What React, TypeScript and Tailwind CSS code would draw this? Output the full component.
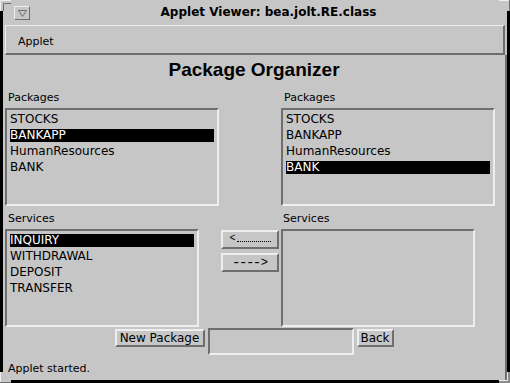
import React from "react";

function ListBox({
  items,
  selected,
  widthClass,
}: {
  items: string[];
  selected: number;
  widthClass: string;
}) {
  return (
    <div
      className={`${widthClass} h-[98px] border-2 border-t-[#6e6e6e] border-l-[#6e6e6e] border-b-[#eeeeee] border-r-[#eeeeee] pt-[2px] px-[3px]`}
    >
      {items.map((it, i) => (
        <div key={it} className="h-[16px] pt-[1px]">
          <div
            className={`h-[13px] leading-[13px] text-[12px] whitespace-nowrap ${
              i === selected ? "bg-black text-white" : "text-black"
            }`}
          >
            {it}
          </div>
        </div>
      ))}
    </div>
  );
}

function Raised({
  className,
  children,
}: {
  className: string;
  children: React.ReactNode;
}) {
  return (
    <div
      className={`${className} border-2 border-t-[#eeeeee] border-l-[#eeeeee] border-b-[#6e6e6e] border-r-[#6e6e6e] flex items-center justify-center`}
    >
      {children}
    </div>
  );
}

export default function App() {
  const pkgs = ["STOCKS", "BANKAPP", "HumanResources", "BANK"];
  const services = ["INQUIRY", "WITHDRAWAL", "DEPOSIT", "TRANSFER"];
  return (
    <div className="relative w-[510px] h-[383px] bg-black overflow-hidden font-['DejaVu_Sans',sans-serif] text-black">
      <div className="mx-[3px] h-[380px] bg-[#c6c6c6] flex flex-col">
        {/* title bar */}
        <div className="h-[25px] shrink-0 flex items-start">
          <div className="ml-[11px] mt-[6px] w-[16px] h-[14px] border border-t-[#eeeeee] border-l-[#eeeeee] border-b-[#6e6e6e] border-r-[#6e6e6e] flex items-center justify-center">
            <svg width="9" height="7" viewBox="0 0 9 7">
              <path d="M0.5 0.5 H8.5 L4.5 6.5 Z" fill="none" stroke="#6e6e6e" strokeWidth="1" />
            </svg>
          </div>
          <div className="flex-1 text-center font-bold text-[12px] leading-[14px] mt-[5px] whitespace-nowrap">
            Applet Viewer: bea.jolt.RE.class
          </div>
        </div>

        {/* applet menu box */}
        <div className="mx-[2px] h-[30px] shrink-0 border-t border-l border-t-[#eeeeee] border-l-[#eeeeee] border-b-2 border-r-2 border-b-[#6e6e6e] border-r-[#6e6e6e] pl-[12px] pt-[9px] text-[11px] leading-[13px]">
          Applet
        </div>

        {/* body */}
        <div className="flex-1 flex flex-col border-r-2 border-r-[#6e6e6e]">
          <div className="mt-[4px] h-[21px] leading-[21px] text-[19px] font-bold text-center font-['Liberation_Sans',sans-serif]">
            Package Organizer
          </div>

          {/* packages */}
          <div className="mt-[11px] flex pl-[2px] gap-[62px]">
            <div className="w-[214px] flex flex-col">
              <div className="pl-[3px] h-[13px] text-[11px] leading-[13px]">Packages</div>
              <div className="mt-[4px]">
                <ListBox items={pkgs} selected={1} widthClass="w-[214px]" />
              </div>
            </div>
            <div className="w-[214px] flex flex-col">
              <div className="pl-[3px] h-[13px] text-[11px] leading-[13px]">Packages</div>
              <div className="mt-[4px]">
                <ListBox items={pkgs} selected={3} widthClass="w-[214px]" />
              </div>
            </div>
          </div>

          {/* services */}
          <div className="mt-[6px] flex items-start pl-[2px]">
            <div className="w-[194px] flex flex-col">
              <div className="pl-[3px] h-[13px] text-[11px] leading-[13px]">Services</div>
              <div className="mt-[4px]">
                <ListBox items={services} selected={0} widthClass="w-[194px]" />
              </div>
            </div>
            <div className="ml-[22px] mt-[18px] w-[58px] flex flex-col gap-[4px]">
              <Raised className="h-[19px] w-[58px]">
                <span className="text-[10px] leading-[10px] font-['Liberation_Mono',monospace] mt-[-1px]">&lt;</span>
                <span className="ml-[1px] mt-[4px] w-[34px] h-0 border-t border-dotted border-black" />
              </Raised>
              <Raised className="h-[19px] w-[58px]">
                <span className="text-[14px] leading-[14px] tracking-[-1.5px] font-['Liberation_Mono',monospace]">----</span>
                <span className="ml-[1px] text-[12px] leading-[14px] font-['Liberation_Mono',monospace]">&gt;</span>
              </Raised>
            </div>
            <div className="ml-[2px] w-[194px] flex flex-col">
              <div className="pl-[2px] h-[13px] text-[11px] leading-[13px]">Services</div>
              <div className="mt-[4px]">
                <ListBox items={[]} selected={-1} widthClass="w-[194px]" />
              </div>
            </div>
          </div>

          {/* bottom row */}
          <div className="mt-[1px] flex justify-center items-start gap-[3px] h-[27px]">
            <Raised className="mt-[1px] h-[18px] w-[90px]">
              <span className="text-[12px] leading-[14px] whitespace-nowrap">New Package</span>
            </Raised>
            <div className="w-[146px] h-[27px] border-2 border-t-[#6e6e6e] border-l-[#6e6e6e] border-b-[#eeeeee] border-r-[#eeeeee]" />
            <Raised className="mt-[1px] h-[18px] w-[37px]">
              <span className="text-[12px] leading-[14px]">Back</span>
            </Raised>
          </div>

          <div className="mt-[7px] pl-[5px] text-[11px] leading-[13px]">Applet started.</div>
        </div>
      </div>

      {/* window corner handles */}
      <svg className="absolute left-0 top-0" width="11" height="11" viewBox="0 0 11 11">
        <path d="M0 0 H11 V3 H3 V11 H0 Z" fill="#c6c6c6" />
        <path d="M0.5 11 V0.5 H11" fill="none" stroke="#eeeeee" />
        <path d="M3.5 11 V3.5 H11" fill="none" stroke="#6e6e6e" />
      </svg>
      <svg className="absolute right-0 top-0" width="11" height="11" viewBox="0 0 11 11">
        <path d="M0 0 H11 V11 H8 V3 H0 Z" fill="#c6c6c6" />
        <path d="M0 0.5 H10.5" fill="none" stroke="#eeeeee" />
        <path d="M10.5 0 V11" fill="none" stroke="#6e6e6e" />
      </svg>
      <svg className="absolute left-0 bottom-0" width="11" height="11" viewBox="0 0 11 11">
        <path d="M0 0 H3 V8 H11 V11 H0 Z" fill="#c6c6c6" />
        <path d="M0.5 0 V10.5" fill="none" stroke="#eeeeee" />
        <path d="M0 10.5 H11" fill="none" stroke="#6e6e6e" />
      </svg>
      <svg className="absolute right-0 bottom-0" width="11" height="11" viewBox="0 0 11 11">
        <path d="M8 0 H11 V11 H0 V8 H8 Z" fill="#8a8a8a" />
        <path d="M0 8.5 H8.5 V0" fill="none" stroke="#eeeeee" />
      </svg>
    </div>
  );
}
